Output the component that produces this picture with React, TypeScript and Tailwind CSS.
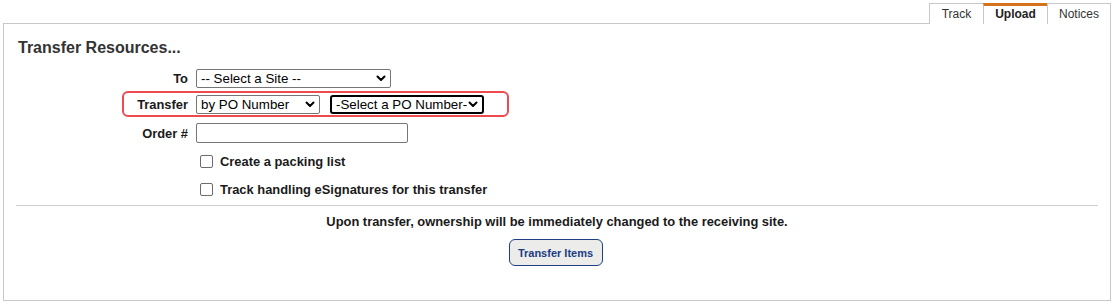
import { ChangeEvent, useState } from "react"

/* ---------- small form bits ---------- */
function Chevron() {
  return (
    <svg width="10" height="7" viewBox="0 0 10 7" className="shrink-0">
      <polyline points="1.5,1.5 5,5 8.5,1.5" fill="none" stroke="#000" strokeWidth="2" strokeLinecap="round" strokeLinejoin="round" />
    </svg>
  )
}

function FakeSelect({ value, width, focused }: { value: string; width: string; focused?: boolean }) {
  return (
    <div
      className={`flex h-[19px] items-center justify-between pl-[4px] pr-[4px] text-[13.33px] leading-none text-black ${width} ${
        focused ? "rounded-[3px] border-2 border-black pl-[3px]" : "rounded-[2px] border border-[#767676]"
      }`}
    >
      <span className="whitespace-nowrap">{value}</span>
      <Chevron />
    </div>
  )
}

function Label({ children, width }: { children: string; width: string }) {
  return (
    <span className={`${width} shrink-0 pr-2 text-right text-[12.9px] font-bold text-[#1a1a1a]`}>{children}</span>
  )
}

function CheckRow({ label }: { label: string }) {
  const [checked, setChecked] = useState(false)
  return (
    <label className="ml-[180px] flex h-[20px] items-center gap-[7px] pl-[4px]">
      <input
        type="checkbox"
        checked={checked}
        onChange={(e: ChangeEvent<HTMLInputElement>) => setChecked(e.target.checked)}
        className="size-[13px] shrink-0 appearance-none rounded-[2px] border border-[#6b6b6b] bg-white"
      />
      <span className="text-[12.9px] font-bold text-[#1a1a1a]">{label}</span>
    </label>
  )
}

/* ---------- Page ---------- */
export default function App() {
  const [order, setOrder] = useState("")

  return (
    <div className="h-[305px] w-[1118px] bg-white pl-[3px] pr-[7px] font-['Liberation_Sans',Arial,sans-serif]">
      {/* tabs */}
      <div className="relative z-10 -mb-px flex justify-end pt-[3px]">
        <div className="flex h-[21px] w-[54px] items-center justify-center border-l border-t border-[#c8c8c8] bg-white text-[12px] text-[#333]">
          Track
        </div>
        <div className="flex h-[21px] w-[64px] items-center justify-center border-l border-t-[3px] border-l-[#c8c8c8] border-t-[#d4731a] bg-white pb-[2px] text-[12px] font-bold text-[#222]">
          Upload
        </div>
        <div className="flex h-[21px] w-[64px] items-center justify-center border-x border-t border-[#c8c8c8] bg-white text-[12px] text-[#333]">
          Notices
        </div>
      </div>

      {/* panel */}
      <div className="h-[278px] border border-[#c8c8c8] px-[12px]">
        <h1 className="pl-[2px] pt-[15px] text-[16px] leading-[18px] font-bold text-[#333]">Transfer Resources...</h1>

        {/* To */}
        <div className="mt-[12px] flex items-center">
          <Label width="w-[180px]">To</Label>
          <FakeSelect value="-- Select a Site --" width="w-[195px]" />
        </div>

        {/* Transfer (highlighted) */}
        <div className="ml-[106px] mt-[3px] flex h-[26px] w-[387px] items-center rounded-[6px] border-2 border-[#ee4b51]">
          <Label width="w-[72px]">Transfer</Label>
          <FakeSelect value="by PO Number" width="w-[124px]" />
          <div className="ml-[10px]">
            <FakeSelect value="-Select a PO Number-" width="w-[154px]" focused />
          </div>
        </div>

        {/* Order # */}
        <div className="mt-[6px] flex items-center">
          <Label width="w-[180px]">Order #</Label>
          <input
            value={order}
            onChange={(e: ChangeEvent<HTMLInputElement>) => setOrder(e.target.value)}
            className="h-[20px] w-[212px] rounded-[2px] border border-[#767676] px-1 text-[13.33px] outline-none"
          />
        </div>

        <div className="mt-[8px]">
          <CheckRow label="Create a packing list" />
        </div>
        <div className="mt-[8px]">
          <CheckRow label="Track handling eSignatures for this transfer" />
        </div>

        <div className="mt-[6px] border-t border-[#cfcfcf]" />

        <p className="mt-[8px] text-center text-[12.9px] leading-[16px] font-bold text-[#1a1a1a]">
          Upon transfer, ownership will be immediately changed to the receiving site.
        </p>

        <div className="mt-[9px] flex justify-center pr-[3px]">
          <button className="h-[27px] w-[94px] rounded-[6px] border border-[#1e3f86] bg-[#ececea] text-[11px] font-bold text-[#1b3d84]">
            Transfer Items
          </button>
        </div>
      </div>
    </div>
  )
}
